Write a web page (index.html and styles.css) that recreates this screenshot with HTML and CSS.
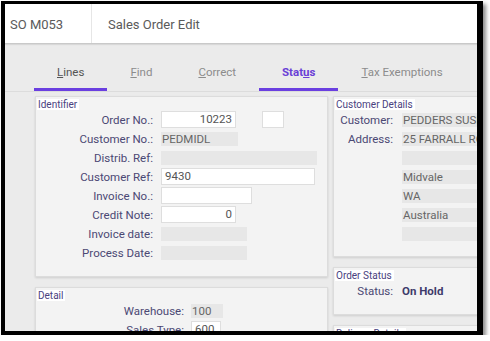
FILE: index.html
```html
<!DOCTYPE html>
<html lang="en">
<head>
    <meta charset="UTF-8">
    <title>Sales Order Edit</title>
    <link rel="stylesheet" href="styles.css">
</head>
<body>
    <div class="frame">
        <div class="header">
            <div class="code">SO M053</div>
            <div class="title">Sales Order Edit</div>
        </div>
        <div class="content">
            <div class="tabs">
                <div class="tab visited"><u>L</u>ines</div>
                <div class="tab"><u>F</u>ind</div>
                <div class="tab"><u>C</u>orrect</div>
                <div class="tab active">Stat<u>u</u>s</div>
                <div class="tab"><u>T</u>ax Exemptions</div>
            </div>
            <div class="columns">
                <div class="column">
                    <div class="panel identifier">
                        <span class="panel-title">Identifier</span>
                        <div class="form ident-form">
                            <label>Order No.:</label>
                            <div class="value"><span class="input num w75">10223</span><span class="input w22 extra"></span></div>
                            <label>Customer No.:</label>
                            <div class="value"><span class="box w77">PEDMIDL</span></div>
                            <label>Distrib. Ref:</label>
                            <div class="value"><span class="box w156"></span></div>
                            <label>Customer Ref:</label>
                            <div class="value"><span class="input w154">9430</span></div>
                            <label>Invoice No.:</label>
                            <div class="value"><span class="input w91"></span></div>
                            <label>Credit Note:</label>
                            <div class="value"><span class="input num w75">0</span></div>
                            <label>Invoice date:</label>
                            <div class="value"><span class="box w86"></span></div>
                            <label>Process Date:</label>
                            <div class="value"><span class="box w86"></span></div>
                        </div>
                    </div>
                    <div class="panel detail">
                        <span class="panel-title">Detail</span>
                        <div class="form detail-form">
                            <label>Warehouse:</label>
                            <div class="value"><span class="box w32">100</span></div>
                            <label>Sales Type:</label>
                            <div class="value"><span class="input w30">600</span></div>
                        </div>
                    </div>
                </div>
                <div class="column right">
                    <div class="panel customer">
                        <span class="panel-title">Customer Details</span>
                        <div class="form cust-form">
                            <label>Customer:</label>
                            <div class="value"><span class="box wide">PEDDERS SUSPENSION</span></div>
                            <label>Address:</label>
                            <div class="value"><span class="box wide">25 FARRALL ROAD</span></div>
                            <label></label>
                            <div class="value"><span class="box wide"></span></div>
                            <label></label>
                            <div class="value"><span class="box wide">Midvale</span></div>
                            <label></label>
                            <div class="value"><span class="box wide">WA</span></div>
                            <label></label>
                            <div class="value"><span class="box wide">Australia</span></div>
                            <label></label>
                            <div class="value"><span class="box wide"></span></div>
                        </div>
                    </div>
                    <div class="panel status">
                        <span class="panel-title">Order Status</span>
                        <div class="form cust-form">
                            <label>Status:</label>
                            <div class="value"><span class="strong">On Hold</span></div>
                        </div>
                    </div>
                    <div class="panel">
                        <span class="panel-title">Delivery Details</span>
                    </div>
                </div>
            </div>
        </div>
    </div>
</body>
</html>
```

FILE: styles.css
```css
* {
    margin: 0;
    padding: 0;
    box-sizing: border-box;
}

body {
    background: #fff;
    font-family: Roboto, "Liberation Sans", sans-serif;
    overflow: hidden;
}

.frame {
    margin: 1px 0 0 1px;
    width: 482px;
    height: 334px;
    border-style: solid;
    border-color: #000;
    border-width: 3px 6px 4px 4px;
    box-shadow: 3px 3px 4px rgba(0, 0, 0, 0.45);
    overflow: hidden;
    background: #ebebeb;
}

.header {
    height: 40px;
    background: #fff;
    display: flex;
    align-items: stretch;
    border-bottom: 1px solid #c9c9c9;
    box-shadow: 0 1px 1px rgba(0, 0, 0, 0.08);
    font-size: 13px;
    color: #5a5a5a;
}

.header .code {
    width: 87px;
    padding: 2px 0 0 5px;
    display: flex;
    align-items: center;
    border-right: 1px solid #e6e6e6;
}

.header .title {
    padding: 2px 0 0 16px;
    display: flex;
    align-items: center;
}

.tabs {
    display: flex;
    padding-left: 29px;
    border-bottom: 1px solid #dcdcdc;
}

.tab {
    flex-shrink: 0;
    white-space: nowrap;
    height: 47px;
    padding: 20px 23px 0;
    line-height: 16px;
    font-size: 11.5px;
    color: #8c8c8c;
    border-bottom: 3px solid transparent;
}

.tab.visited {
    color: #555;
    border-bottom-color: #6a3fe0;
}

.tab.active {
    color: #6a3fd6;
    font-weight: bold;
    border-bottom-color: #6a3fe0;
}

.columns {
    display: grid;
    grid-template-columns: 293px 220px;
    column-gap: 5px;
    padding: 4px 0 0 30px;
}

.column {
    display: flex;
    flex-direction: column;
    gap: 10px;
}

.panel {
    background: #f3f3f3;
    border: 1px solid #dcdcdc;
    box-shadow: 0 1px 2px rgba(0, 0, 0, 0.12);
    padding: 2px 1px 0;
}

.panel-title {
    display: block;
    width: fit-content;
    background: #fff;
    font-size: 10px;
    line-height: 11px;
    padding: 0 2px 0 1px;
    color: #4a4280;
}

.form {
    display: grid;
    grid-auto-rows: 19px;
    align-items: center;
    margin-top: 0;
    font-size: 11.5px;
}

.form label {
    text-align: right;
    color: #4b4874;
}

.ident-form {
    grid-template-columns: 116px auto;
    column-gap: 8px;
}

.identifier {
    height: 181px;
}

.detail {
    height: 80px;
}

.detail-form {
    grid-template-columns: 147px auto;
    column-gap: 7px;
}

.customer {
    height: 161px;
}

.status {
    height: 48px;
}

.cust-form {
    grid-template-columns: 58px auto;
    column-gap: 9px;
}

.value {
    display: flex;
    align-items: center;
}

.input {
    display: block;
    height: 17px;
    line-height: 15px;
    background: #fff;
    border: 1px solid #dedede;
    padding: 0 3px;
    color: #555;
}

.input.num {
    text-align: right;
}

.input.extra {
    margin-left: 26px;
}

.box {
    display: block;
    height: 14px;
    line-height: 14px;
    background: #e7e7e7;
    padding: 0 1px;
    color: #666;
    white-space: nowrap;
    overflow: hidden;
}

.strong {
    font-weight: bold;
    color: #3e3b6b;
}

.w22 { width: 22px; }
.w30 { width: 30px; }
.w32 { width: 32px; }
.w75 { width: 75px; }
.w77 { width: 77px; }
.w86 { width: 86px; }
.w91 { width: 91px; }
.w154 { width: 154px; }
.w156 { width: 156px; }
.wide { width: 160px; }
```
